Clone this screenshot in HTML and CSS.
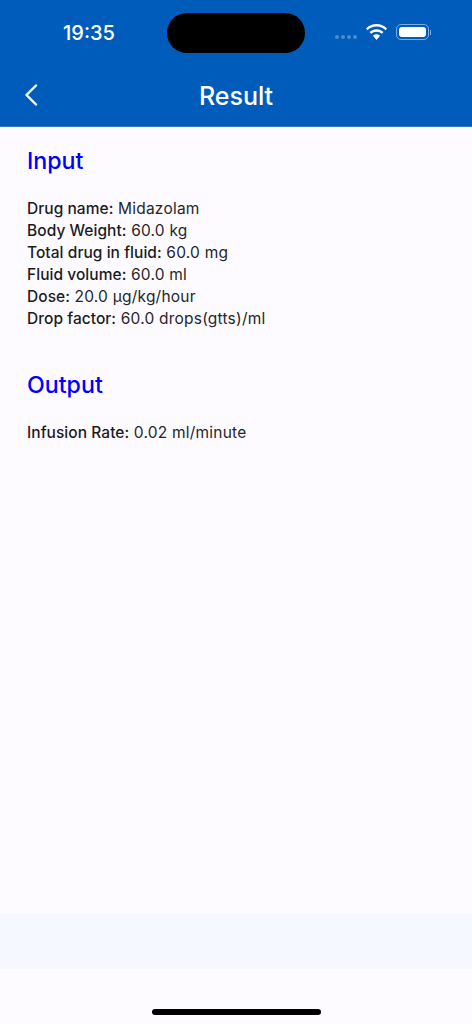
FILE: index.html
```html
<!DOCTYPE html>
<html lang="en">
<head>
    <meta charset="UTF-8">
    <meta name="viewport" content="width=device-width, initial-scale=1.0">
    <title>Result</title>
    <link rel="stylesheet" href="styles.css">
</head>
<body>

    <div class="screen">
        <header class="app-header">
            <div class="status-bar">
                <span class="status-time">19:35</span>
                <div class="island"></div>
                <div class="status-icons">
                    <div class="signal-dots"><i></i><i></i><i></i><i></i></div>
                    <svg class="wifi" width="21" height="16" viewBox="1 0 18 13.700">
                        <path d="M10 2.200c3 0 5.700 1.200 7.700 3.100l1.300-1.500C16.700 1.500 13.500 0 10 0S3.300 1.500 1 3.800l1.300 1.500C4.300 3.400 7 2.200 10 2.200z" fill="#fff"/>
                        <path d="M10 6.600c1.800 0 3.400.7 4.600 1.800l1.400-1.500C14.400 5.400 12.300 4.400 10 4.400S5.600 5.400 4 6.900l1.400 1.500c1.200-1.100 2.800-1.800 4.600-1.800z" fill="#fff"/>
                        <path d="M10 8.800c-1.200 0-2.200.5-3 1.200l3 3.600 3-3.600c-.8-.7-1.800-1.200-3-1.200z" fill="#fff"/>
                    </svg>
                    <div class="battery">
                        <div class="battery-body"><div class="battery-level"></div></div>
                        <div class="battery-cap"></div>
                    </div>
                </div>
            </div>
            <div class="nav-bar">
                <svg class="back" width="14" height="22" viewBox="0 0 14 22">
                    <path d="M12 1.500 2.500 11 12 20.500" fill="none" stroke="#fff" stroke-width="2.400" stroke-linecap="round" stroke-linejoin="round"/>
                </svg>
                <h1 class="nav-title">Result</h1>
            </div>
        </header>

        <main class="content">
            <section class="result-section">
                <h2 class="section-title">Input</h2>
                <p class="result-row"><b>Drug name:</b> Midazolam</p>
                <p class="result-row"><b>Body Weight:</b> 60.0 kg</p>
                <p class="result-row"><b>Total drug in fluid:</b> 60.0 mg</p>
                <p class="result-row"><b>Fluid volume:</b> 60.0 ml</p>
                <p class="result-row"><b>Dose:</b> 20.0 µg/kg/hour</p>
                <p class="result-row"><b>Drop factor:</b> 60.0 drops(gtts)/ml</p>
            </section>
            <section class="result-section">
                <h2 class="section-title">Output</h2>
                <p class="result-row"><b>Infusion Rate:</b> 0.02 ml/minute</p>
            </section>
        </main>

        <div class="bottom-strip"></div>
        <div class="home-area"><div class="home-bar"></div></div>
    </div>

</body>
</html>
```

FILE: styles.css
```css
* {
    box-sizing: border-box;
}

body {
    margin: 0;
    font-family: Inter, "Liberation Sans", sans-serif;
    background-color: #fdfbff;
}

.screen {
    display: flex;
    flex-direction: column;
    height: 1024px;
    overflow: hidden;
}

.app-header {
    height: 127px;
    padding-top: 13px;
    background-color: #005cbb;
    border-bottom: 1px solid #2f7ccb;
}

.status-bar {
    display: flex;
    align-items: flex-start;
    height: 40px;
}

.status-time {
    width: 167px;
    padding: 8px 0 0 11px;
    text-align: center;
    font-size: 20px;
    font-weight: 500;
    line-height: 24px;
    color: #fff;
}

.island {
    width: 138px;
    height: 40px;
    border-radius: 20px;
    background-color: #000;
}

.status-icons {
    display: flex;
    align-items: center;
    padding: 11px 0 0 30px;
}

.signal-dots {
    display: flex;
    gap: 2px;
    margin-top: 9px;
}

.signal-dots i {
    width: 4px;
    height: 4px;
    border-radius: 50%;
    background-color: #4a8bd0;
}

.wifi {
    margin: 0 0 0 9px;
}

.battery {
    display: flex;
    align-items: center;
    margin-left: 9px;
}

.battery-body {
    width: 33px;
    height: 16px;
    padding: 2px;
    border: 1px solid #7dabdf;
    border-radius: 5px;
}

.battery-level {
    height: 100%;
    border-radius: 3px;
    background-color: #fff;
}

.battery-cap {
    width: 1px;
    height: 5px;
    margin-left: 1px;
    background-color: #7dabdf;
}

.nav-bar {
    position: relative;
    display: flex;
    align-items: center;
    justify-content: center;
    height: 60px;
    margin-top: 13px;
}

.back {
    position: absolute;
    left: 24px;
    top: 18px;
}

.nav-title {
    margin: 0;
    font-size: 25px;
    font-weight: 500;
    color: #fff;
}

.content {
    flex: 1;
    padding: 19px 27px 0;
}

.result-section {
    margin-bottom: 40px;
}

.section-title {
    margin: 0 0 22px;
    font-size: 23.2px;
    font-weight: 500;
    line-height: 30px;
    color: #0000ff;
}

.result-row {
    margin: 0;
    font-size: 15.5px;
    line-height: 22px;
    letter-spacing: 0.22px;
    color: #26262a;
}

.result-row b {
    font-weight: 500;
    letter-spacing: 0.05px;
    color: #1b1b1f;
}

.bottom-strip {
    height: 55px;
    background-color: #f5f9ff;
}

.home-area {
    display: flex;
    justify-content: center;
    height: 55px;
    padding-top: 40px;
}

.home-bar {
    width: 169px;
    height: 6px;
    border-radius: 3px;
    background-color: #000;
}
```
